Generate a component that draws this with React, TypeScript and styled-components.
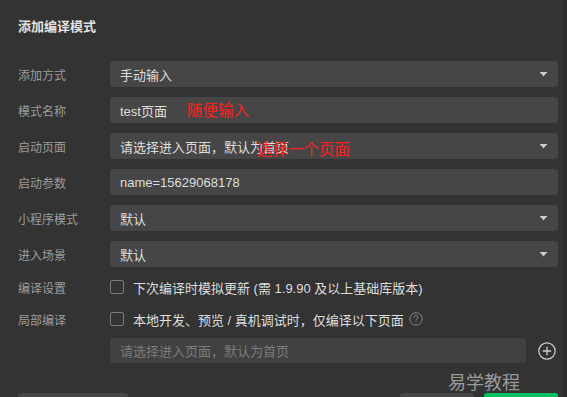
import React from 'react';
import styled, { createGlobalStyle } from 'styled-components';

const GlobalStyle = createGlobalStyle`
    html, body {
        margin: 0;
        padding: 0;
        background: #333333;
        overflow: hidden;
    }
    body {
        font-family: "Liberation Sans", "Noto Sans CJK SC", sans-serif;
    }
`;

const Dialog = styled.div`
    position: relative;
    width: 567px;
    height: 397px;
    box-sizing: border-box;
    padding: 0 5px 0 18px;
    background: #333333;
    border-right: 4px solid #2d2d2d;
    overflow: hidden;
`;

const Title = styled.div`
    margin-top: 17px;
    height: 20px;
    line-height: 20px;
    font-size: 13px;
    font-weight: bold;
    color: #e2e2e2;
`;

const Form = styled.div`
    display: flex;
    flex-direction: column;
    margin-top: 24px;
`;

const Row = styled.div<{ $height: number; $gap: number }>`
    display: flex;
    align-items: center;
    height: ${(p) => p.$height}px;
    margin-bottom: ${(p) => p.$gap}px;
`;

const Label = styled.div`
    width: 92px;
    flex: none;
    font-size: 12px;
    color: #9c9c9c;
`;

const Field = styled.div<{ $muted?: boolean }>`
    position: relative;
    flex: 1;
    height: 100%;
    box-sizing: border-box;
    display: flex;
    align-items: center;
    justify-content: space-between;
    padding: 0 10px;
    border-radius: 3px;
    background: ${(p) => (p.$muted ? '#414141' : '#464646')};
    font-size: 13px;
    color: ${(p) => (p.$muted ? '#7c7c7c' : '#dedede')};
    white-space: nowrap;
`;

const Caret = styled.svg`
    flex: none;
    margin-right: 1px;
`;

const Note = styled.span<{ $left: number; $top: number }>`
    position: absolute;
    left: ${(p) => p.$left}px;
    top: ${(p) => p.$top}px;
    font-size: 15.5px;
    line-height: 1;
    color: #ff1f1f;
    font-family: "Noto Sans CJK SC", sans-serif;
`;

const CheckLine = styled.label`
    display: flex;
    align-items: center;
    font-size: 13px;
    color: #dedede;
    white-space: nowrap;
`;

const Box = styled.span`
    width: 14px;
    height: 14px;
    box-sizing: border-box;
    border: 1px solid #7a7a7a;
    border-radius: 2px;
    margin-right: 9px;
    flex: none;
`;

const HelpIcon = styled.svg`
    margin-left: 5px;
`;

const AddButton = styled.svg`
    flex: none;
    margin: 0 2px 0 12px;
`;

const Footer = styled.div`
    display: flex;
    justify-content: space-between;
    margin-top: 30px;
`;

const Actions = styled.div`
    display: flex;
    gap: 10px;
`;

const Button = styled.div<{ $width: number; $primary?: boolean }>`
    width: ${(p) => p.$width}px;
    height: 30px;
    border-radius: 3px;
    background: ${(p) => (p.$primary ? '#07c160' : '#464646')};
`;

const Watermark = styled.div`
    position: absolute;
    left: 448px;
    top: 368px;
    font-size: 18px;
    color: #9a9a9a;
    font-family: "Noto Sans CJK SC", sans-serif;
`;

const DropCaret = () => (
    <Caret width="7" height="5" viewBox="0 0 7 5">
        <path d="M0 0h7v1.3H0z M1 1.3h5L3.5 4.6z" fill="#cfcfcf" />
    </Caret>
);

const rows = [
    { label: '添加方式', value: '手动输入', select: true },
    { label: '模式名称', value: 'test页面', note: { text: '随便输入', left: 77, top: 5 } },
    { label: '启动页面', value: '请选择进入页面，默认为首页', select: true, note: { text: '选择一个页面', left: 147, top: 8 } },
    { label: '启动参数', value: 'name=15629068178' },
    { label: '小程序模式', value: '默认', select: true },
    { label: '进入场景', value: '默认', select: true },
];

export default function App() {
    return (
        <>
            <GlobalStyle />
            <Dialog>
                <Title>添加编译模式</Title>
                <Form>
                    {rows.map((r, i) => (
                        <Row key={r.label} $height={26} $gap={i === rows.length - 1 ? 4 : 10}>
                            <Label>{r.label}</Label>
                            <Field>
                                <span>{r.value}</span>
                                {r.select && <DropCaret />}
                                {r.note && (
                                    <Note $left={r.note.left} $top={r.note.top}>
                                        {r.note.text}
                                    </Note>
                                )}
                            </Field>
                        </Row>
                    ))}
                    <Row $height={32} $gap={0}>
                        <Label>编译设置</Label>
                        <CheckLine>
                            <Box />
                            下次编译时模拟更新 (需 1.9.90 及以上基础库版本)
                        </CheckLine>
                    </Row>
                    <Row $height={32} $gap={3}>
                        <Label>局部编译</Label>
                        <CheckLine>
                            <Box />
                            本地开发、预览 / 真机调试时，仅编译以下页面
                            <HelpIcon width="14" height="14" viewBox="0 0 14 14">
                                <circle cx="7" cy="7" r="6.2" fill="none" stroke="#8a8a8a" strokeWidth="1" />
                                <path
                                    d="M5.1 5.4a1.9 1.9 0 1 1 2.7 1.7c-.6.3-.8.6-.8 1.2v.4"
                                    fill="none"
                                    stroke="#8a8a8a"
                                    strokeWidth="1"
                                />
                                <circle cx="7" cy="10.3" r="0.6" fill="#8a8a8a" />
                            </HelpIcon>
                        </CheckLine>
                    </Row>
                    <Row $height={25} $gap={0}>
                        <Label />
                        <Field $muted>请选择进入页面，默认为首页</Field>
                        <AddButton width="18" height="18" viewBox="0 0 18 18">
                            <circle cx="9" cy="9" r="8.2" fill="none" stroke="#cfcfcf" strokeWidth="1.2" />
                            <path d="M9 4.8v8.4M4.8 9h8.4" stroke="#cfcfcf" strokeWidth="1.3" />
                        </AddButton>
                    </Row>
                </Form>
                <Footer>
                    <Button $width={110} />
                    <Actions>
                        <Button $width={74} />
                        <Button $width={74} $primary />
                    </Actions>
                </Footer>
                <Watermark>易学教程</Watermark>
            </Dialog>
        </>
    );
}
